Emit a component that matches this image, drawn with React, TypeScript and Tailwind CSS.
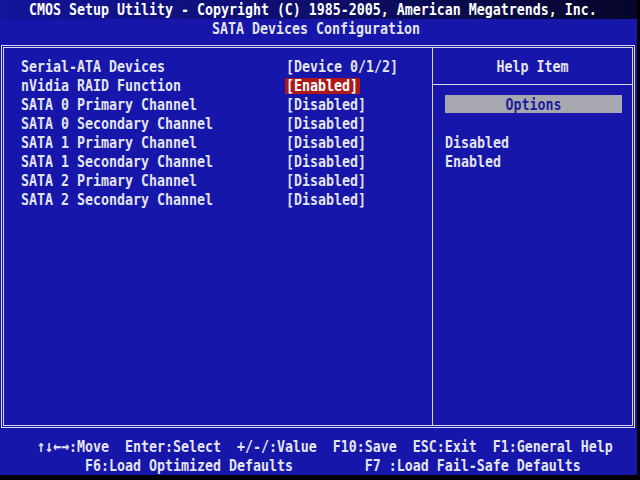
import React from "react";

const rows: [string, string, boolean?][] = [
  ["Serial-ATA Devices", "[Device 0/1/2]"],
  ["nVidia RAID Function", "[Enabled]", true],
  ["SATA 0 Primary Channel", "[Disabled]"],
  ["SATA 0 Secondary Channel", "[Disabled]"],
  ["SATA 1 Primary Channel", "[Disabled]"],
  ["SATA 1 Secondary Channel", "[Disabled]"],
  ["SATA 2 Primary Channel", "[Disabled]"],
  ["SATA 2 Secondary Channel", "[Disabled]"],
];

// BIOS glyphs are taller than DejaVu's, so stretch each line vertically
const T: React.FC<{ children: React.ReactNode; className?: string }> = ({ children, className = "" }) => (
  <span className={"inline-block scale-y-125 whitespace-pre " + className}>{children}</span>
);

const App: React.FC = () => {
  return (
    <div className="w-[640px] h-[480px] bg-black overflow-hidden font-['DejaVu_Sans_Mono',monospace] text-[13.29px] font-bold text-[#e4e4ec] leading-[19px]">
      <div className="w-[637px] h-[475px] bg-[#1616aa] flex flex-col">
        {/* Title bar */}
        <div className="h-[19px] pl-[29px] bg-gradient-to-r from-[#14149a] via-[#0e0e6a] to-[#06062a] text-white">
          <T>CMOS Setup Utility - Copyright (C) 1985-2005, American Megatrends, Inc.</T>
        </div>
        <div className="h-[19px] pl-[212px]">
          <T>SATA Devices Configuration</T>
        </div>

        {/* Main frame (double line) */}
        <div className="mt-[7px] ml-[1px] w-[634px] h-[384px] border border-[#d8d8e8] p-[1px]">
          <div className="h-full border border-[#d8d8e8] flex">
            {/* Settings */}
            <div className="w-[429px] border-r border-[#d8d8e8] pt-[9px] pl-[17px]">
              {rows.map(([label, value, sel]) => (
                <div key={label} className="flex h-[19px]">
                  <div className="w-[264px]">
                    <T>{label}</T>
                  </div>
                  <div className="flex items-center">
                    {sel ? (
                      <div className="bg-[#b01818] h-[16px] pl-[1px] pr-[2px] flex items-center text-white">
                        <T>{value}</T>
                      </div>
                    ) : (
                      <div className="pl-[1px]">
                        <T>{value}</T>
                      </div>
                    )}
                  </div>
                </div>
              ))}
            </div>

            {/* Help panel */}
            <div className="flex-1 flex flex-col">
              <div className="h-[37px] border-b border-[#d8d8e8] flex items-center justify-center pt-[1px]">
                <T>Help Item</T>
              </div>
              <div className="mt-[10px] ml-[12px] mr-[10px] h-[18px] bg-[#a8a8b0] flex items-center justify-center text-[#1c1c9c]">
                <T>Options</T>
              </div>
              <div className="mt-[20px] pl-[12px]">
                <div><T>Disabled</T></div>
                <div><T>Enabled</T></div>
              </div>
            </div>
          </div>
        </div>

        {/* Footer */}
        <div className="mt-[9px] pl-[37px]">
          <div className="h-[19px]">
            <T>↑↓←→:Move  Enter:Select  +/-/:Value  F10:Save  ESC:Exit  F1:General Help</T>
          </div>
          <div className="h-[19px]">
            <T>{"      F6:Load Optimized Defaults         F7 :Load Fail-Safe Defaults"}</T>
          </div>
        </div>
      </div>
    </div>
  );
};

export default App;
